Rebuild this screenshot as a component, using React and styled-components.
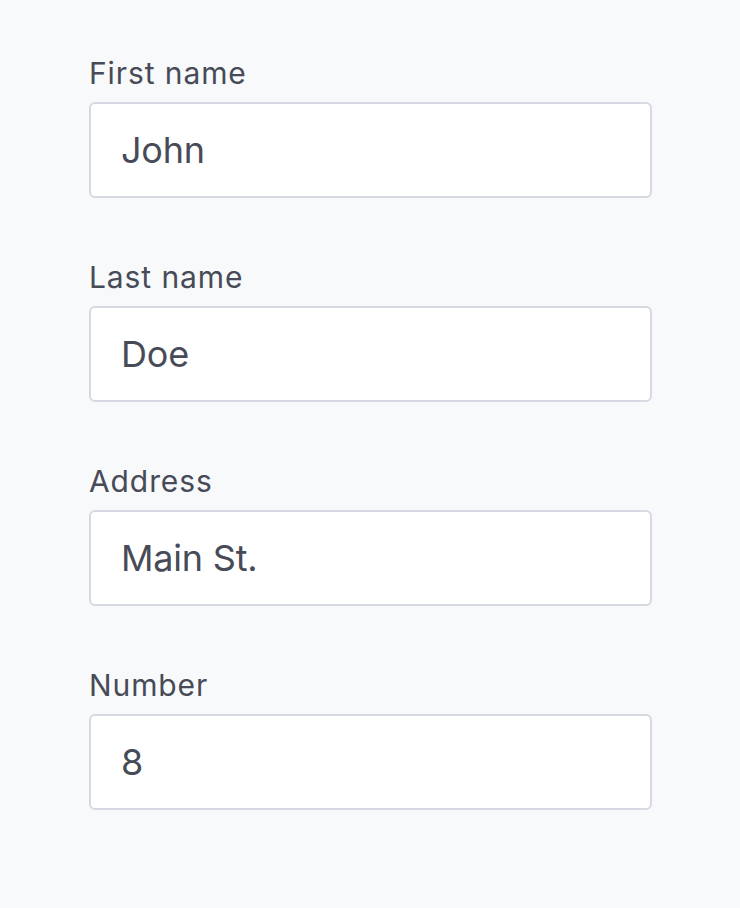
import React from "react";
import styled, { createGlobalStyle } from "styled-components";

const Global = createGlobalStyle`
  html, body { margin: 0; padding: 0; background: #f8f9fb; }
  body { font-family: Inter, "Liberation Sans", sans-serif; }
  * { box-sizing: border-box; }
`;

const Form = styled.form`
  display: flex;
  flex-direction: column;
  gap: 57px;
  padding: 51px 88px 0 89px;
  width: 740px;
  min-height: 908px;
  background: #f8f9fb;
`;

const Field = styled.div`
  display: flex;
  flex-direction: column;
  gap: 6px;
`;

const Label = styled.label`
  font-family: Inter, "Liberation Sans", sans-serif;
  font-size: 30px;
  line-height: 45px;
  color: #474b57;
  letter-spacing: 0.9px;
`;

const Input = styled.input`
  display: block;
  width: 563px;
  height: 96px;
  margin: 0;
  padding: 0 30px;
  border: 2px solid #d6d9e1;
  border-radius: 6px;
  background: #ffffff;
  font-family: Inter, "Liberation Sans", sans-serif;
  font-size: 36px;
  letter-spacing: -0.2px;
  color: #474b57;
  outline: none;
`;

const fields = [
  { id: "first", label: "First name", value: "John" },
  { id: "last", label: "Last name", value: "Doe" },
  { id: "address", label: "Address", value: "Main St." },
  { id: "number", label: "Number", value: "8" },
];

export default function App() {
  return (
    <>
      <Global />
      <Form onSubmit={(e) => e.preventDefault()}>
        {fields.map((f) => (
          <Field key={f.id}>
            <Label htmlFor={f.id}>{f.label}</Label>
            <Input id={f.id} defaultValue={f.value} readOnly />
          </Field>
        ))}
      </Form>
    </>
  );
}
